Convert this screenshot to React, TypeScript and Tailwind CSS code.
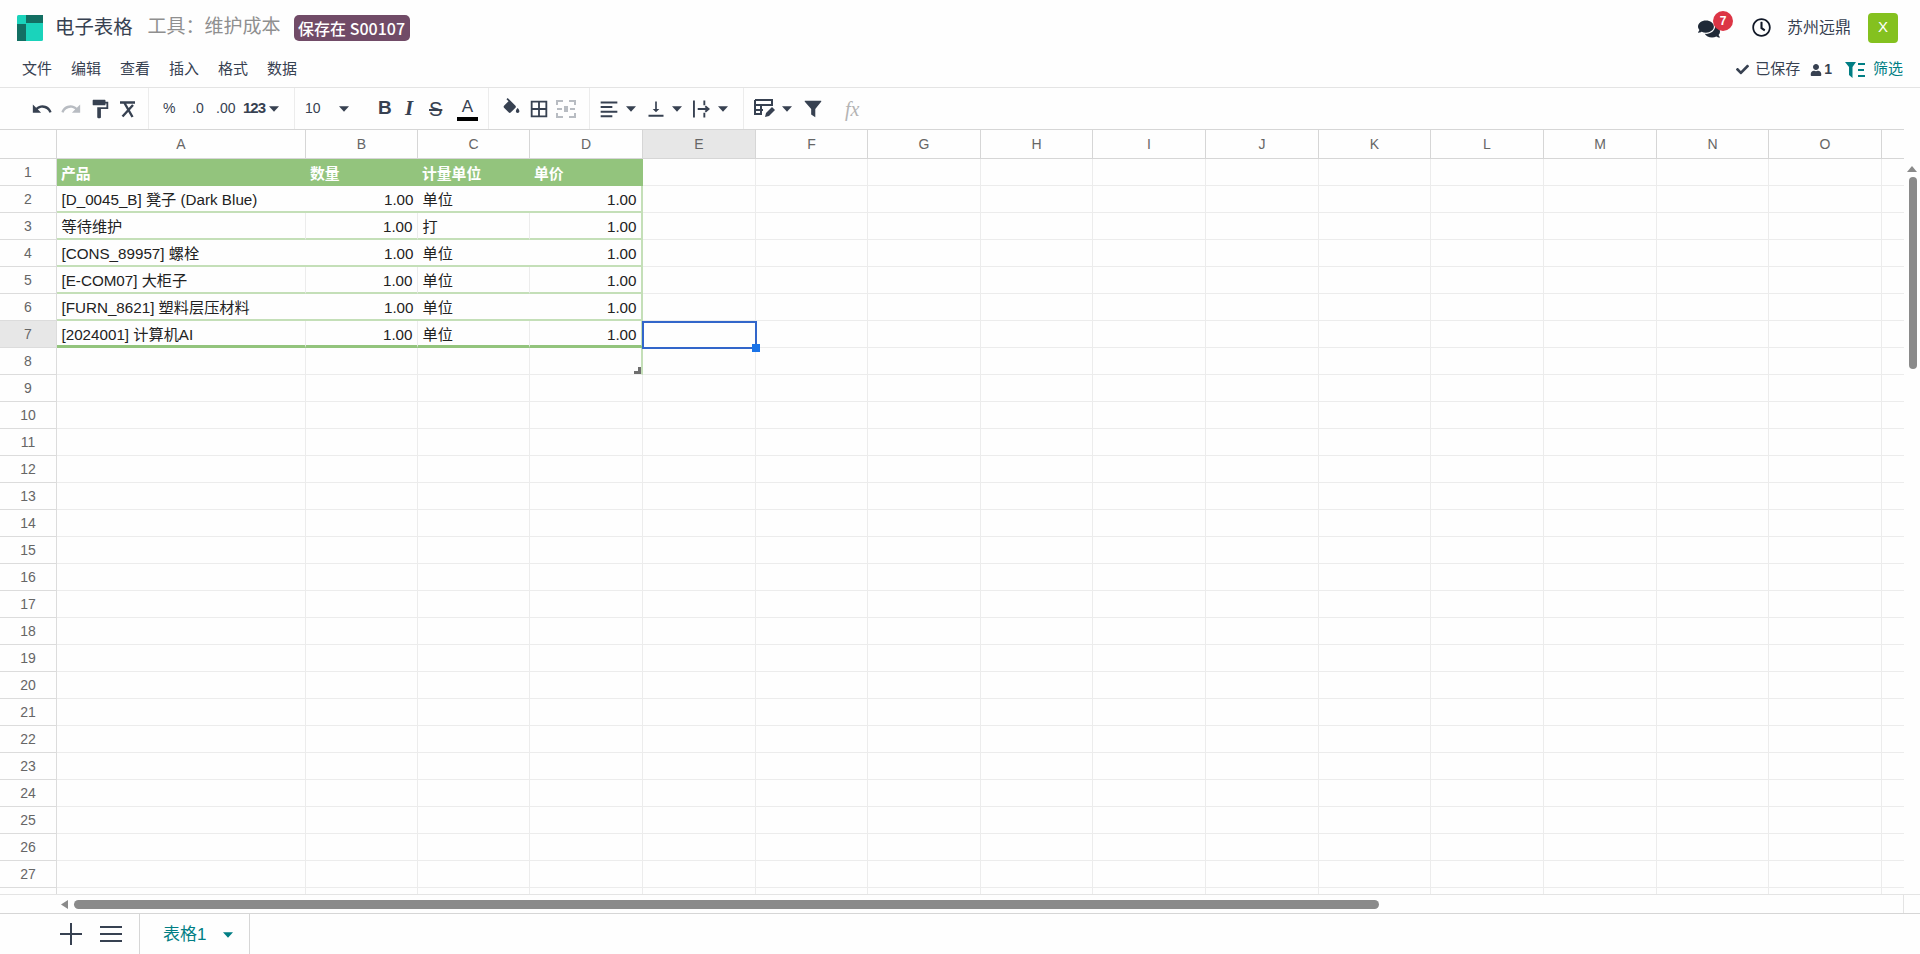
import { FaComments, FaRegClock, FaCheck, FaUser } from "react-icons/fa";

const FONT = "font-['Liberation_Sans','Noto_Sans_CJK_SC',sans-serif]";

const colWidths = [249, 112, 112, 113, 113, 112, 113, 112, 113, 113, 112, 113, 113, 112, 113, 23];
const colNames = ["A", "B", "C", "D", "E", "F", "G", "H", "I", "J", "K", "L", "M", "N", "O", ""];

const tableRows = [
  ["[D_0045_B] 凳子 (Dark Blue)", "1.00", "单位", "1.00"],
  ["等待维护", "1.00", "打", "1.00"],
  ["[CONS_89957] 螺栓", "1.00", "单位", "1.00"],
  ["[E-COM07] 大柜子", "1.00", "单位", "1.00"],
  ["[FURN_8621] 塑料层压材料", "1.00", "单位", "1.00"],
  ["[2024001] 计算机AI", "1.00", "单位", "1.00"],
];

const rowNumbers = Array.from({ length: 28 }, (_, i) => i + 1);

function Caret({ color = "#374151" }: { color?: string }) {
  return (
    <svg width="10" height="6" viewBox="0 0 11 6" className="shrink-0">
      <path d="M0 0h11L5.5 6z" fill={color} />
    </svg>
  );
}

function MatIcon({ d, size = 22, color = "#374151" }: { d: string; size?: number; color?: string }) {
  return (
    <svg width={size} height={size} viewBox="0 0 24 24" className="shrink-0">
      <path d={d} fill={color} />
    </svg>
  );
}

function Sep() {
  return <div className="h-[41px] w-px shrink-0 bg-[#ececec]" />;
}

function Toolbar() {
  return (
    <div className="flex h-[42px] shrink-0 items-center border-t border-[#e4e4e4] text-[#374151]">
      <div className="flex w-[148px] shrink-0 items-center gap-[7px] pl-[31px]">
        <MatIcon size={22} d="M12.5 8c-2.65 0-5.05.99-6.9 2.6L2 7v9h9l-3.62-3.62c1.39-1.16 3.16-1.88 5.12-1.88 3.54 0 6.55 2.31 7.6 5.5l2.37-.78C21.08 11.03 17.15 8 12.5 8z" />
        <MatIcon size={22} color="#b8bcc2" d="M18.4 10.6C16.55 8.99 14.15 8 11.5 8c-4.65 0-8.58 3.03-9.96 7.22L3.9 16c1.05-3.19 4.05-5.5 7.6-5.5 1.95 0 3.73.72 5.12 1.88L13 16h9V7l-3.6 3.6z" />
        <MatIcon size={22} d="M18 4V3c0-.55-.45-1-1-1H5c-.55 0-1 .45-1 1v4c0 .55.45 1 1 1h12c.55 0 1-.45 1-1V6h1v4H9v11c0 .55.45 1 1 1h2c.55 0 1-.45 1-1v-9h8V4h-3z" />
        <svg width="18" height="18" viewBox="0 0 18 18" className="ml-[1px] shrink-0">
          <path d="M1 2.5h15M5.5 3l8 14M14 5L3.5 16.5" stroke="#374151" strokeWidth="2.4" fill="none" />
        </svg>
      </div>
      <Sep />
      <div className="flex w-[145px] shrink-0 items-center pl-[14px] text-[14px]">
        <span className="w-[29px]">%</span>
        <span className="w-[24px]">.0</span>
        <span className="w-[27px]">.00</span>
        <span className="w-[26px] text-[15px] font-bold tracking-[-1px]">123</span>
        <Caret />
      </div>
      <Sep />
      <div className="flex w-[193px] shrink-0 items-center pl-[10px] text-[14px]">
        <span className="w-[34px]">10</span>
        <Caret />
        <span className="ml-[29px] w-[25px] text-[19px] font-bold">B</span>
        <span className="w-[26px] pl-[2px] font-['Liberation_Serif'] text-[21px] leading-none font-bold italic">I</span>
        <span className="w-[28px] text-[20px] line-through decoration-2">S</span>
        <span className="flex w-[21px] flex-col items-center border-b-[4px] border-black text-[17px] leading-[20px]">A</span>
      </div>
      <Sep />
      <div className="flex w-[100px] shrink-0 items-center gap-[6px] pl-[12px]">
        <MatIcon size={21} d="M16.56 8.94L7.62 0 6.21 1.41l2.38 2.38-5.15 5.15c-.59.59-.59 1.54 0 2.12l5.5 5.5c.29.29.68.44 1.06.44s.77-.15 1.06-.44l5.5-5.5c.59-.58.59-1.53 0-2.12zM19 11.5s-2 2.17-2 3.5c0 1.1.9 2 2 2s2-.9 2-2c0-1.33-2-3.5-2-3.5z" />
        <MatIcon size={22} d="M3 3v18h18V3H3zm8 16H5v-6h6v6zm0-8H5V5h6v6zm8 8h-6v-6h6v6zm0-8h-6V5h6v6z" />
        <svg width="20" height="18" viewBox="0 0 20 18" className="shrink-0">
          <path d="M1 5V1h6M13 1h6v4M1 13v4h6M13 17h6v-4M1 9h5M14 9h5M9 6v6M11 6v6" stroke="#b8bcc2" strokeWidth="2" fill="none" />
        </svg>
      </div>
      <Sep />
      <div className="flex w-[153px] shrink-0 items-center pl-[9px]">
        <MatIcon size={20} d="M2 3h20v2.4H2zM2 8.5h14v2.4H2zM2 14h20v2.4H2zM2 19.5h14v2.4H2z" />
        <span className="ml-[7px]"><Caret /></span>
        <span className="ml-[10px]"><MatIcon size={20} d="M16 12h-3V3h-2v9H8l4 4 4-4zM3 19v2.4h18V19H3z" /></span>
        <span className="ml-[6px]"><Caret /></span>
        <svg width="17" height="18" viewBox="0 0 18 18" className="ml-[11px] shrink-0">
          <path d="M1 0v18M12 0v5M12 13v5M5 9h11M13 6l3.5 3-3.5 3" stroke="#374151" strokeWidth="2" fill="none" />
        </svg>
        <span className="ml-[8px]"><Caret /></span>
      </div>
      <Sep />
      <div className="flex w-[91px] shrink-0 items-center pl-[10px]">
        <svg width="22" height="20" viewBox="0 0 22 20" className="shrink-0">
          <path d="M1 1h17v6M1 1v14h7M1 6h17M1 11h8M7 6v9" stroke="#374151" strokeWidth="2" fill="none" />
          <path d="M11 18l1-4 6-6 3 3-6 6z" fill="#374151" />
        </svg>
        <span className="ml-[6px]"><Caret /></span>
        <span className="ml-[10px]"><MatIcon size={22} d="M3.5 3h17c.5 0 .8.6.4 1L14.5 12v9L10 18v-6L3.1 4c-.4-.4-.1-1 .4-1z" /></span>
      </div>
      <span className="ml-[10px] font-['Liberation_Serif'] text-[20px] italic text-[#b4b4b4]">fx</span>
    </div>
  );
}

function ColumnHeader() {
  return (
    <div className="flex h-[30px] shrink-0 border-y border-[#d6d6d6]">
      <div className="w-[57px] shrink-0 border-r border-[#d6d6d6]" />
      {colWidths.map((w, i) => (
        <div
          key={i}
          style={{ width: w }}
          className={`flex shrink-0 items-center justify-center border-r border-[#d6d6d6] text-[14px] text-[#666666] ${colNames[i] === "E" ? "bg-[#e7e7e7]" : ""}`}
        >
          {colNames[i]}
        </div>
      ))}
    </div>
  );
}

function HeaderRow() {
  const labels = ["产品", "数量", "计量单位", "单价"];
  return (
    <div className="flex h-[27px] shrink-0">
      <RowNum n={1} />
      {colWidths.map((w, i) =>
        i < 4 ? (
          <div
            key={i}
            style={{ width: w }}
            className="flex shrink-0 items-center bg-[#93c47d] pt-[3px] pl-[4px] text-[14.8px] font-bold text-white"
          >
            {labels[i]}
          </div>
        ) : (
          <BlankCell key={i} width={w} />
        )
      )}
    </div>
  );
}

function RowNum({ n }: { n: number }) {
  return (
    <div
      className={`flex w-[57px] shrink-0 items-center justify-center border-r border-b border-[#dcdcdc] text-[14px] text-[#666666] ${n === 7 ? "bg-[#e7e7e7]" : ""}`}
    >
      {n < 28 ? n : ""}
    </div>
  );
}

function BlankCell({ width, selected }: { width: number; selected?: boolean }) {
  return (
    <div style={{ width }} className="relative shrink-0 border-r border-b border-[#ececec]">
      {selected && (
        <div className="absolute top-0 -left-[1px] z-10 h-[28px] w-[115px] border-2 border-[#3266ca]">
          <div className="absolute -right-[5px] -bottom-[5px] h-[8px] w-[8px] bg-[#1a73e8]" />
        </div>
      )}
    </div>
  );
}

function DataRow({ n, cells }: { n: number; cells: string[] }) {
  const isLast = n === 7;
  const showLines = n % 2 === 1;
  return (
    <div className="flex h-[27px] shrink-0">
      <RowNum n={n} />
      {colWidths.map((w, i) =>
        i < 4 ? (
          <div
            key={i}
            style={{ width: w }}
            className={`flex shrink-0 items-center px-[4.5px] pt-[4px] text-[15.2px] text-[#222222] ${i === 1 || i === 3 ? "justify-end" : ""} ${isLast ? "border-b-[3px] border-b-[#93c47d]" : "border-b-2 border-b-[#c4dfb8]"} ${i === 3 ? "border-r-2 border-r-[#c4dfb8]" : showLines ? "border-r border-r-[#ececec]" : ""}`}
          >
            {cells[i]}
          </div>
        ) : (
          <BlankCell key={i} width={w} selected={isLast && i === 4} />
        )
      )}
    </div>
  );
}

function EmptyRow({ n }: { n: number }) {
  return (
    <div className="flex h-[27px] shrink-0">
      <RowNum n={n} />
      {colWidths.map((w, i) =>
        n === 8 && i === 3 ? (
          <div key={i} style={{ width: w }} className="relative shrink-0 border-r-2 border-b border-r-[#c4dfb8] border-b-[#ececec]">
            <svg width="7" height="7" viewBox="0 0 7 7" className="absolute right-0 bottom-0">
              <path d="M7 0v7H0V4h4V0z" fill="#6e6e6e" />
            </svg>
          </div>
        ) : (
          <BlankCell key={i} width={w} />
        )
      )}
    </div>
  );
}

export default function App() {
  return (
    <div className={`flex h-[954px] w-[1920px] flex-col overflow-hidden bg-[#fefefe] ${FONT}`}>
      {/* Top bar */}
      <div className="flex h-[52px] shrink-0 items-center pt-[3px] pr-[22px] pl-[17px]">
        <svg width="26" height="26" viewBox="0 0 26 26" className="shrink-0">
          <rect width="26" height="26" rx="1.5" fill="#1ad3bb" />
          <path d="M9 0h17v8H9z" fill="#136f63" />
          <path d="M0 9h9v17H0z" fill="#136f63" />
        </svg>
        <span className="ml-[12px] text-[19.4px] text-[#374151]">电子表格</span>
        <span className="ml-[15px] text-[19px] text-[#8f8f8f]">工具：维护成本</span>
        <span className="ml-[13px] flex h-[26px] w-[116px] items-center justify-center rounded-[5px] bg-[#714b67] font-['Noto_Sans_CJK_SC',sans-serif] text-[16px] font-medium text-white">
          保存在 S00107
        </span>
        <div className="ml-auto flex items-center">
          <div className="relative h-[22px] w-[22px] translate-y-[1px]">
            <FaComments size={22} color="#1f2937" />
            <span className="absolute -top-[7px] left-[15px] flex h-[20px] w-[20px] items-center justify-center rounded-full bg-[#dc3545] text-[12px] font-bold text-white">
              7
            </span>
          </div>
          <span className="ml-[32px]"><FaRegClock size={19} color="#111827" /></span>
          <span className="ml-[16px] text-[16px] text-[#374151]">苏州远鼎</span>
          <span className="ml-[17px] flex h-[30px] w-[30px] items-center justify-center rounded-[4px] bg-[#84c11f] text-[15px] text-white">
            X
          </span>
        </div>
      </div>

      {/* Menu row */}
      <div className="flex h-[35px] shrink-0 items-center pr-[17px] pl-[22px] text-[15px] text-[#374151]">
        <div className="flex gap-[19px]">
          {["文件", "编辑", "查看", "插入", "格式", "数据"].map((m) => (
            <span key={m}>{m}</span>
          ))}
        </div>
        <div className="ml-auto flex items-center">
          <FaCheck size={13} color="#374151" />
          <span className="ml-[6px]">已保存</span>
          <span className="ml-[10px]"><FaUser size={12} color="#374151" /></span>
          <span className="ml-[2px] text-[14px] font-bold">1</span>
          <svg width="20" height="16" viewBox="0 0 20 16" className="ml-[13px] shrink-0">
            <path d="M0 0h11L7.5 5v11L4 13V5z" fill="#017e84" />
            <path d="M13 1h7v2h-7zM13 7h6v2h-6zM13 13h7v2h-7z" fill="#017e84" />
          </svg>
          <span className="ml-[8px] text-[#017e84]">筛选</span>
        </div>
      </div>

      <Toolbar />

      {/* Sheet */}
      <div className="relative flex min-h-0 flex-1 flex-col overflow-hidden">
        <ColumnHeader />
        <HeaderRow />
        {tableRows.map((cells, i) => (
          <DataRow key={i} n={i + 2} cells={cells} />
        ))}
        {rowNumbers.slice(7).map((n) => (
          <EmptyRow key={n} n={n} />
        ))}
        {/* scrollbars lie over the grid */}
        <div className="absolute top-0 right-0 bottom-0 w-[16px] bg-[#fefefe]" />
        <svg width="10" height="6" viewBox="0 0 10 6" className="absolute top-[37px] right-[3px]">
          <path d="M5 0l5 6H0z" fill="#8a8a8a" />
        </svg>
        <div className="absolute top-[48px] right-[3px] h-[192px] w-[8px] rounded-full bg-[#8a8a8a]" />
      </div>

      {/* Horizontal scroll strip */}
      <div className="flex h-[19px] shrink-0 items-center border-t border-[#e4e4e4] pl-[61px]">
        <svg width="7" height="9" viewBox="0 0 7 9" className="shrink-0">
          <path d="M7 0v9L0 4.5z" fill="#8a8a8a" />
        </svg>
        <div className="ml-[6px] h-[9px] w-[1305px] rounded-full bg-[#8a8a8a]" />
        <div className="mr-[16px] ml-auto h-full w-px bg-[#e4e4e4]" />
      </div>

      {/* Sheet tabs */}
      <div className="flex h-[41px] shrink-0 items-center border-t border-[#d6d6d6]">
        <div className="flex h-full w-[140px] shrink-0 items-center border-r border-[#d6d6d6] pl-[60px]">
          <svg width="22" height="22" viewBox="0 0 22 22" className="shrink-0">
            <path d="M11 0v22M0 11h22" stroke="#374151" strokeWidth="2" />
          </svg>
          <svg width="22" height="16" viewBox="0 0 22 16" className="ml-[18px] shrink-0">
            <path d="M0 1h22M0 8h22M0 15h22" stroke="#374151" strokeWidth="2" />
          </svg>
        </div>
        <div className="flex h-full w-[110px] shrink-0 items-center border-r border-[#d6d6d6] pt-[2px] pl-[23px] text-[17px] text-[#017e84]">
          表格1
          <span className="ml-[17px]"><Caret color="#017e84" /></span>
        </div>
      </div>
    </div>
  );
}
